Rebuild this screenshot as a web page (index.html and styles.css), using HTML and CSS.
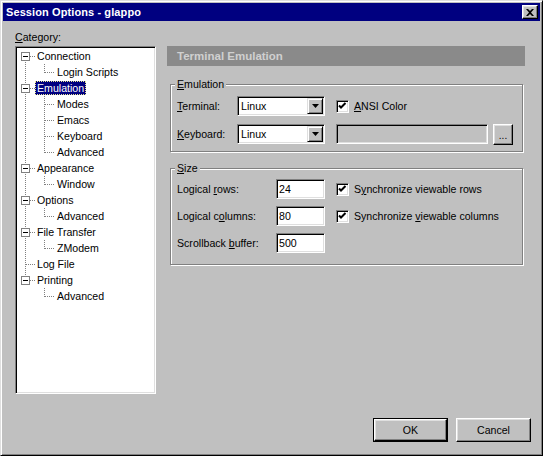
FILE: index.html
```html
<!DOCTYPE html>
<html>
<head>
<meta charset="utf-8">
<title>Session Options - glappo</title>
<link rel="stylesheet" href="styles.css">
</head>
<body>
<div class="win">
  <div class="titlebar">
    <span class="title">Session Options - glappo</span>
    <span class="close"><svg width="8" height="7" viewBox="0 0 8 7"><path d="M0 0h2l2 2 2-2h2L5 3.5 8 7H6L4 5 2 7H0l3-3.5z" fill="#000"/></svg></span>
  </div>
  <div class="client">
    <div class="main">
      <div class="left">
        <div class="cat-label"><u>C</u>ategory:</div>
        <div class="tree">
          <div class="row r-first"><span class="exp"></span><span class="lbl">Connection</span></div>
          <div class="row child c-last"><span class="lbl">Login Scripts</span></div>
          <div class="row r-mid"><span class="exp"></span><span class="lbl sel">Emulation</span></div>
          <div class="row child c-mid"><span class="lbl">Modes</span></div>
          <div class="row child c-mid"><span class="lbl">Emacs</span></div>
          <div class="row child c-mid"><span class="lbl">Keyboard</span></div>
          <div class="row child c-last"><span class="lbl">Advanced</span></div>
          <div class="row r-mid"><span class="exp"></span><span class="lbl">Appearance</span></div>
          <div class="row child c-last"><span class="lbl">Window</span></div>
          <div class="row r-mid"><span class="exp"></span><span class="lbl">Options</span></div>
          <div class="row child c-last"><span class="lbl">Advanced</span></div>
          <div class="row r-mid"><span class="exp"></span><span class="lbl">File Transfer</span></div>
          <div class="row child c-last"><span class="lbl">ZModem</span></div>
          <div class="row leaf r-mid"><span class="lbl">Log File</span></div>
          <div class="row r-last"><span class="exp"></span><span class="lbl">Printing</span></div>
          <div class="row child c-last-noroot"><span class="lbl">Advanced</span></div>
        </div>
      </div>
      <div class="right">
        <div class="header">Terminal Emulation</div>
        <div class="group emu">
          <div class="legend"><span><u>E</u>mulation</span></div>
          <div class="frow first">
            <span class="flabel w60"><u>T</u>erminal:</span>
            <span class="combo"><span class="ctext">Linux</span><span class="cbtn"><svg width="7" height="4" viewBox="0 0 7 4"><path d="M0 0h7L3.5 4z" fill="#000"/></svg></span></span>
            <span class="check"><svg width="9" height="9" viewBox="0 0 9 9"><path d="M1 3.5l2 2 4.5-4.5" stroke="#000" stroke-width="2" fill="none"/></svg></span>
            <span class="ctext-label"><u>A</u>NSI Color</span>
          </div>
          <div class="frow">
            <span class="flabel w60"><u>K</u>eyboard:</span>
            <span class="combo"><span class="ctext">Linux</span><span class="cbtn"><svg width="7" height="4" viewBox="0 0 7 4"><path d="M0 0h7L3.5 4z" fill="#000"/></svg></span></span>
            <span class="edit disabled"></span>
            <span class="btn small">...</span>
          </div>
        </div>
        <div class="group size">
          <div class="legend"><span><u>S</u>ize</span></div>
          <div class="frow first">
            <span class="flabel w99">Logical <u>r</u>ows:</span>
            <span class="edit num">24</span>
            <span class="check"><svg width="9" height="9" viewBox="0 0 9 9"><path d="M1 3.5l2 2 4.5-4.5" stroke="#000" stroke-width="2" fill="none"/></svg></span>
            <span class="ctext-label">S<u>y</u>nchronize viewable rows</span>
          </div>
          <div class="frow">
            <span class="flabel w99">Logical c<u>o</u>lumns:</span>
            <span class="edit num">80</span>
            <span class="check"><svg width="9" height="9" viewBox="0 0 9 9"><path d="M1 3.5l2 2 4.5-4.5" stroke="#000" stroke-width="2" fill="none"/></svg></span>
            <span class="ctext-label">Synchronize <u>v</u>iewable columns</span>
          </div>
          <div class="frow">
            <span class="flabel w99">Scrollback <u>b</u>uffer:</span>
            <span class="edit num">500</span>
          </div>
        </div>
      </div>
    </div>
    <div class="footer">
      <span class="btn default"><span class="inner">OK</span></span>
      <span class="btn">Cancel</span>
    </div>
  </div>
</div>
</body>
</html>
```

FILE: styles.css
```css
* { box-sizing: border-box; }
html, body { margin: 0; padding: 0; }
body {
  width: 543px;
  height: 456px;
  overflow: hidden;
  background: #c0c0c0;
  font-family: "Liberation Sans", Arial, sans-serif;
  font-size: 10.6px;
  color: #000;
}
u { text-decoration: underline; text-underline-offset: 1px; }

.win {
  width: 543px;
  height: 456px;
  border: 1px solid;
  border-color: #dfdfdf #000 #000 #dfdfdf;
  box-shadow: inset 1px 1px 0 #fff, inset -1px -1px 0 #808080;
  padding: 2px;
  background: #c0c0c0;
  display: flex;
  flex-direction: column;
}

.titlebar {
  height: 18px;
  background: #000080;
  display: flex;
  align-items: center;
  justify-content: space-between;
  padding: 0 2px 0 3px;
}
.title {
  color: #fff;
  font-weight: bold;
  font-size: 11px;
  letter-spacing: 0.1px;
}
.close {
  width: 16px;
  height: 14px;
  background: #c0c0c0;
  border: 1px solid;
  border-color: #fff #000 #000 #fff;
  box-shadow: inset -1px -1px 0 #808080, inset 1px 1px 0 #dfdfdf;
  display: flex;
  align-items: center;
  justify-content: center;
}

.client {
  flex: 1;
  display: flex;
  flex-direction: column;
  padding: 10px 9px 0 12px;
}
.main { display: flex; align-items: flex-start; }

.left { width: 141px; }
.cat-label { height: 13px; line-height: 13px; margin-bottom: 2px; }

.tree {
  height: 348px;
  background: #fff;
  border: 1px solid;
  border-color: #808080 #fff #fff #808080;
  box-shadow: inset 1px 1px 0 #000, inset -1px -1px 0 #dfdfdf;
  padding: 1px 0 0 1px;
  --v: repeating-linear-gradient(to bottom, #808080 0 1px, transparent 1px 2px);
  --h: repeating-linear-gradient(to right, #808080 0 1px, transparent 1px 2px);
}
.row {
  height: 16px;
  display: flex;
  align-items: flex-start;
  background-repeat: no-repeat;
}
.row.child { padding-left: 38px; }
.row.leaf { padding-left: 18px; }
.exp {
  width: 9px;
  height: 9px;
  margin: 4px 5px 0 4px;
  border: 1px solid #808080;
  background: #fff linear-gradient(#000, #000) center / 5px 1px no-repeat;
}
.lbl {
  height: 14px;
  line-height: 14px;
  margin-top: 1px;
  padding: 0 2px;
  white-space: nowrap;
}
.lbl.sel {
  background: #000080;
  color: #fff;
  outline: 1px dotted #e8e890;
  outline-offset: -1px;
}
.r-first {
  background-image: var(--v), var(--h);
  background-position: 8px 8px, 9px 8px;
  background-size: 1px 8px, 10px 1px;
}
.r-mid {
  background-image: var(--v), var(--h);
  background-position: 8px 0, 9px 8px;
  background-size: 1px 16px, 10px 1px;
}
.r-last {
  background-image: var(--v), var(--h);
  background-position: 8px 0, 9px 8px;
  background-size: 1px 8px, 10px 1px;
}
.c-mid {
  background-image: var(--v), var(--v), var(--h);
  background-position: 8px 0, 27px 0, 28px 8px;
  background-size: 1px 16px, 1px 16px, 10px 1px;
}
.c-last {
  background-image: var(--v), var(--v), var(--h);
  background-position: 8px 0, 27px 0, 28px 8px;
  background-size: 1px 16px, 1px 9px, 10px 1px;
}
.c-last-noroot {
  background-image: var(--v), var(--h);
  background-position: 27px 0, 28px 8px;
  background-size: 1px 9px, 10px 1px;
}

.right {
  width: 358px;
  margin: 15px 0 0 11px;
}
.header {
  height: 20px;
  line-height: 20px;
  background: #8a8a8a;
  color: #d0d0d0;
  font-weight: bold;
  font-size: 11.5px;
  padding-left: 10px;
}

.group {
  margin-left: 3px;
  width: 353px;
  border: 1px solid #808080;
  box-shadow: 1px 1px 0 #fff, inset 1px 1px 0 #fff;
  padding: 0 6px;
}
.group.emu { margin-top: 18px; padding-bottom: 7px; }
.group.size { margin-top: 16px; padding-bottom: 11px; }
.legend { height: 13px; line-height: 13px; margin-top: -7px; }
.legend span { background: #c0c0c0; padding: 0 2px; margin-left: -2px; }

.frow {
  height: 20px;
  display: flex;
  align-items: center;
  margin-top: 8px;
  white-space: nowrap;
}
.emu .frow.first { margin-top: 5px; }
.size .frow { margin-top: 7px; }
.size .frow.first { margin-top: 4px; }
.flabel { flex: none; }
.w60 { width: 60px; }
.w99 { width: 99px; }

.combo, .edit, .check {
  border: 1px solid;
  border-color: #808080 #fff #fff #808080;
  box-shadow: inset 1px 1px 0 #000, inset -1px -1px 0 #dfdfdf;
  background: #fff;
}
.combo {
  width: 88px;
  height: 20px;
  padding: 1px;
  display: flex;
  align-items: stretch;
}
.ctext { flex: 1; padding-left: 2px; line-height: 16px; }
.cbtn {
  width: 16px;
  height: 16px;
  background: #c0c0c0;
  border: 1px solid;
  border-color: #dfdfdf #000 #000 #dfdfdf;
  box-shadow: inset 1px 1px 0 #fff, inset -1px -1px 0 #808080;
  display: flex;
  align-items: center;
  justify-content: center;
}
.check {
  width: 13px;
  height: 13px;
  margin-left: 11px;
  margin-right: 5px;
  display: flex;
  align-items: center;
  justify-content: center;
  flex: none;
}
.edit {
  height: 20px;
  padding-left: 2px;
  line-height: 18px;
  flex: none;
}
.edit.num { width: 49px; }
.edit.disabled {
  width: 152px;
  margin-left: 11px;
  background: #c0c0c0;
}

.btn {
  display: flex;
  align-items: center;
  justify-content: center;
  width: 75px;
  height: 24px;
  background: #c0c0c0;
  border: 1px solid;
  border-color: #fff #000 #000 #fff;
  box-shadow: inset -1px -1px 0 #808080, inset 1px 1px 0 #dfdfdf;
  font-size: 10.6px;
}
.btn.small {
  width: 20px;
  height: 21px;
  margin-left: 5px;
  font-size: 10px;
  padding-top: 2px;
}
.btn.default {
  border: 1px solid #000;
  box-shadow: none;
  padding: 0;
}
.btn.default .inner {
  flex: 1;
  align-self: stretch;
  display: flex;
  align-items: center;
  justify-content: center;
  border: 1px solid;
  border-color: #fff #000 #000 #fff;
  box-shadow: inset -1px -1px 0 #808080, inset 1px 1px 0 #dfdfdf;
}

.footer {
  display: flex;
  justify-content: flex-end;
  gap: 8px;
  margin-top: 24px;
}
```
